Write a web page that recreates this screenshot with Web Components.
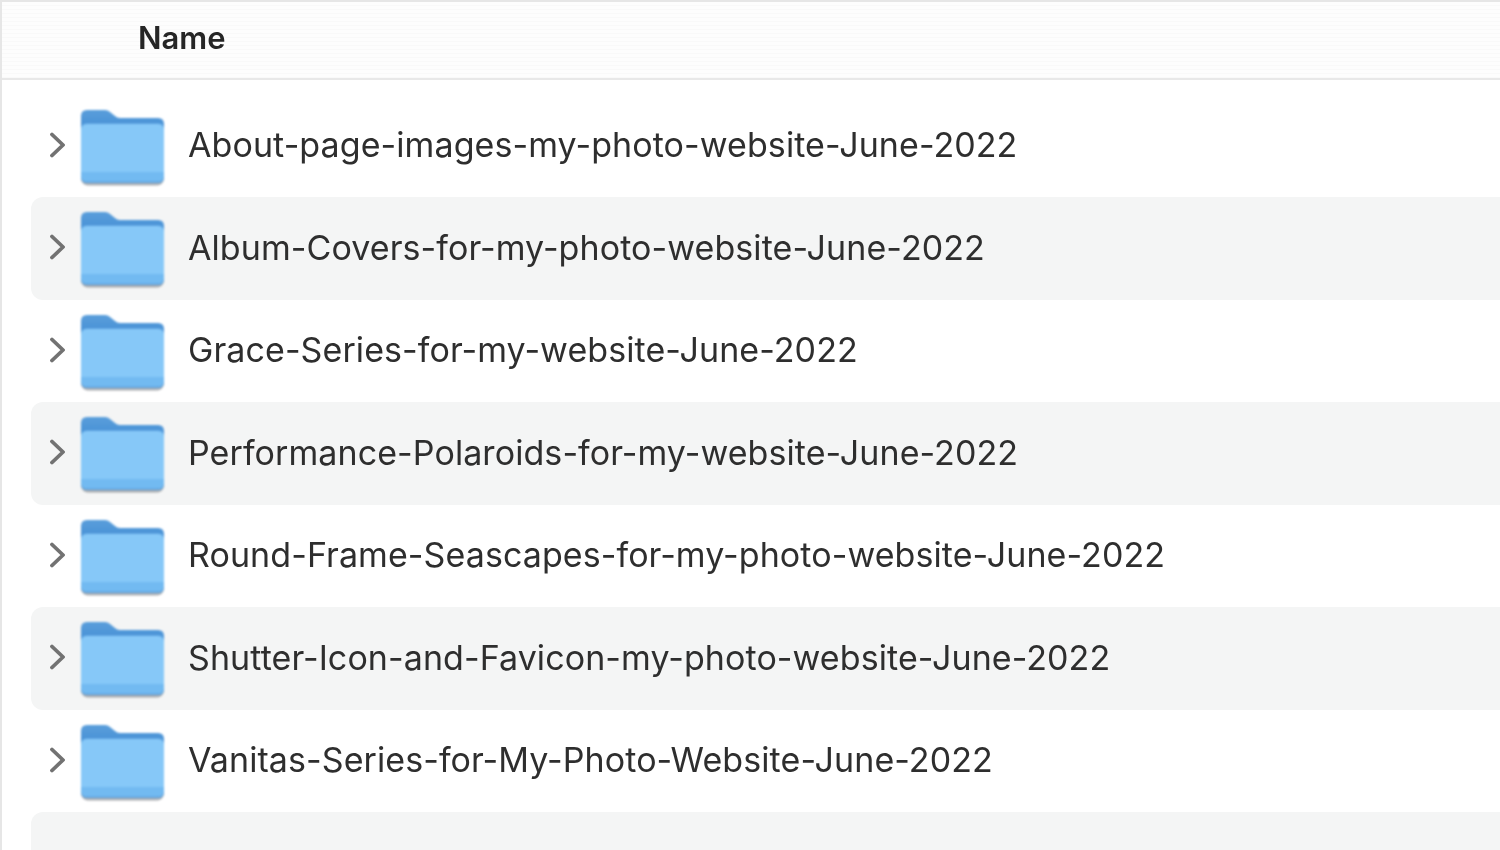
<!DOCTYPE html>
<html>
<head>
<meta charset="utf-8">
<style>
    html, body { margin: 0; height: 100%; background: #fff; overflow: hidden; }
</style>
</head>
<body>
<finder-list>
    <finder-header slot="header">Name</finder-header>
    <finder-row>About-page-images-my-photo-website-June-2022</finder-row>
    <finder-row striped>Album-Covers-for-my-photo-website-June-2022</finder-row>
    <finder-row>Grace-Series-for-my-website-June-2022</finder-row>
    <finder-row striped>Performance-Polaroids-for-my-website-June-2022</finder-row>
    <finder-row>Round-Frame-Seascapes-for-my-photo-website-June-2022</finder-row>
    <finder-row striped>Shutter-Icon-and-Favicon-my-photo-website-June-2022</finder-row>
    <finder-row>Vanitas-Series-for-My-Photo-Website-June-2022</finder-row>
    <finder-row striped empty></finder-row>
</finder-list>
<script>
class FinderList extends HTMLElement {
    constructor(){
        super();
        this.attachShadow({mode:"open"}).innerHTML = `
        <style>
            :host{
                display: block;
                height: 850px;
                box-sizing: border-box;
                border-top: 2px solid #e6e6e6;
                border-left: 2px solid #e6e6e6;
                overflow: hidden;
                font-family: Inter, "Liberation Sans", sans-serif;
            }
            #rows{
                padding-top: 14.5px;
                padding-left: 29px;
            }
        </style>
        <slot name="header"></slot>
        <div id="rows"><slot></slot></div>`;
    }
}

class FinderHeader extends HTMLElement {
    constructor(){
        super();
        this.attachShadow({mode:"open"}).innerHTML = `
        <style>
            :host{
                display: flex;
                align-items: center;
                box-sizing: border-box;
                height: 78px;
                padding-left: 136px;
                padding-bottom: 6px;
                border-bottom: 2px solid #e8e8e8;
                background: repeating-linear-gradient(#fdfdfd 0 3px, #f9f9f9 3px 4px);
                color: #262626;
            }
            span{
                font-size: 31px;
                font-weight: 600;
                filter: blur(0.6px);
            }
        </style>
        <span><slot></slot></span>`;
    }
}

class FolderIcon extends HTMLElement {
    constructor(){
        super();
        this.attachShadow({mode:"open"}).innerHTML = `
        <style>
            :host{ display: block; width: 86px; height: 80px; filter: blur(0.8px); }
            svg{ display: block; }
        </style>
        <svg width="86" height="80" viewBox="0 0 86 80">
            <defs>
                <linearGradient id="tab" x1="0" y1="0" x2="0" y2="1">
                    <stop offset="0" stop-color="#5a9edb"/>
                    <stop offset="1" stop-color="#3a88d2"/>
                </linearGradient>
            </defs>
            <rect x="1" y="14" width="83" height="62.5" rx="7" fill="#777c82" opacity=".6"/>
            <path d="M1 7 Q1 1 7 1 H25 Q28 1 30 3 L35 7 Q37 9 40 9 H78 Q84 9 84 15 V30 H1 Z" fill="url(#tab)"/>
            <path d="M1 20 Q1 14 7 14 H78 Q84 14 84 20 V68 Q84 74 78 74 H7 Q1 74 1 68 Z" fill="#5ea3e0"/>
            <path d="M1 21 Q1 15 7 15 H78 Q84 15 84 21 V67 H1 Z" fill="#86c8f8"/>
            <path d="M1 63 H84 V67 Q84 72.5 78 72.5 H7 Q1 72.5 1 67 Z" fill="#72baf1"/>
        </svg>`;
    }
}

class FinderRow extends HTMLElement {
    constructor(){
        super();
        this.attachShadow({mode:"open"}).innerHTML = `
        <style>
            :host{
                display: flex;
                align-items: center;
                box-sizing: border-box;
                height: 102.5px;
                padding-left: 17.5px;
                border-radius: 12px 0 0 12px;
                color: #2e2e2e;
                font-size: 34px;
                letter-spacing: 0.08px;
                white-space: nowrap;
            }
            :host([striped]){ background: #f4f5f5; }
            #arrow{ display: block; width: 18px; height: 28px; margin-right: 13.5px; margin-top: -2px; filter: blur(0.6px); }
            folder-icon{ margin-top: 6px; margin-right: 22px; }
            #name{ display: block; margin-top: -2px; filter: blur(0.55px); }
        </style>
        <svg id="arrow" viewBox="0 0 18 28">
            <path d="M3 3.5 L14 14 L3 24.5" fill="none" stroke="#727272" stroke-width="3.8" stroke-linecap="round" stroke-linejoin="round"/>
        </svg>
        <folder-icon></folder-icon>
        <span id="name"><slot></slot></span>`;
        if (this.hasAttribute("empty")) {
            this.shadowRoot.querySelector("#arrow").style.visibility = "hidden";
            this.shadowRoot.querySelector("folder-icon").style.visibility = "hidden";
        }
    }
}

customElements.define("finder-list", FinderList);
customElements.define("finder-header", FinderHeader);
customElements.define("folder-icon", FolderIcon);
customElements.define("finder-row", FinderRow);
</script>
</body>
</html>
